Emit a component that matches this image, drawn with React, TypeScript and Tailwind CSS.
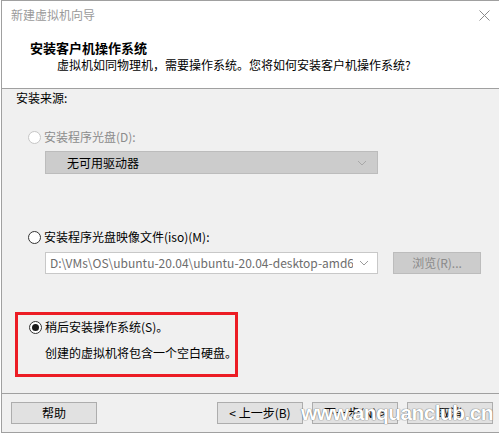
import React from "react";

const font = { fontFamily: '"Noto Sans CJK SC", "Noto Sans", sans-serif' };

function Radio({ checked = false, disabled = false }: { checked?: boolean; disabled?: boolean }) {
  return (
    <span
      className={`relative inline-flex h-[13px] w-[13px] shrink-0 items-center justify-center rounded-full border bg-white ${
        disabled ? "border-[#c6c6c6]" : "border-[#333333]"
      }`}
    >
      {checked && <span className="h-[7px] w-[7px] rounded-full bg-[#1a1a1a]" />}
    </span>
  );
}

function Chevron({ color }: { color: string }) {
  return (
    <svg width="10" height="6" viewBox="0 0 10 6" className="shrink-0">
      <path d="M1 1 L5 5 L9 1" fill="none" stroke={color} strokeWidth="1" />
    </svg>
  );
}

function Button({ children }: { children: React.ReactNode }) {
  return (
    <div className="flex h-[22px] w-[86px] items-center justify-center border border-[#adadad] bg-[#e1e1e1] text-[12px] text-black">
      {children}
    </div>
  );
}

export default function App() {
  return (
    <div className="h-[434px] w-[499px] bg-white" style={font}>
      <div className="ml-[1px] flex h-[433px] w-[498px] flex-col border-l border-t border-b border-[#a0a0a0] bg-[#f0f0f0]">
        {/* header */}
        <div className="h-[88px] shrink-0 border-b border-[#a0a0a0] bg-white">
          <div className="flex items-center justify-between pl-[9px] pr-[9px] pt-[6px]">
            <span className="text-[12px] leading-[16px] text-[#9a9a9a]">新建虚拟机向导</span>
            <svg width="11" height="11" viewBox="0 0 11 11">
              <path d="M0.5 0.5 L10.5 10.5 M10.5 0.5 L0.5 10.5" stroke="#8a8a8a" strokeWidth="1" />
            </svg>
          </div>
          <div className="mt-[17px] pl-[28px] text-[13px] font-bold leading-[16px] text-black">安装客户机操作系统</div>
          <div className="mt-[1px] pl-[55px] text-[12px] leading-[16px] text-black">
            虚拟机如同物理机，需要操作系统。您将如何安装客户机操作系统?
          </div>
        </div>

        {/* body */}
        <div className="flex-1 pl-[14px] pt-[1px]">
          <div className="text-[12px] leading-[16px] text-black">安装来源:</div>

          <div className="mt-[23px] flex items-center gap-[3px] pl-[12px] text-[12px] leading-[16px] text-[#8c8c8c]">
            <Radio disabled />
            <span>安装程序光盘(D):</span>
          </div>
          <div className="ml-[29px] mt-[6px] flex h-[23px] w-[333px] items-center justify-between border border-[#bcbcbc] bg-[#cccccc] pl-[21px] pr-[10px] text-[12px] text-black">
            <span>无可用驱动器</span>
            <Chevron color="#a8a8a8" />
          </div>

          <div className="mt-[55px] flex items-center gap-[3px] pl-[12px] text-[12px] leading-[16px] text-black">
            <Radio />
            <span>安装程序光盘映像文件(iso)(M):</span>
          </div>
          <div className="mt-[7px] flex items-center gap-[15px] pl-[29px]">
            <div className="flex h-[22px] w-[333px] items-center border border-[#c8c8c8] bg-white pl-[4px] pr-[8px] text-[12px] text-[#6d6d6d]">
              <span className="flex-1 overflow-hidden whitespace-nowrap">
                D:\VMs\OS\ubuntu-20.04\ubuntu-20.04-desktop-amd64.iso
              </span>
              <span className="ml-[6px]">
                <Chevron color="#9c9c9c" />
              </span>
            </div>
            <div className="flex h-[22px] w-[88px] items-center justify-center border border-[#bcbcbc] bg-[#cccccc] text-[12px] text-[#8a8a8a]">
              浏览(R)...
            </div>
          </div>

          <div className="-ml-[1px] mt-[38px] h-[65px] w-[223px] border-[3px] border-[#ec1c24] pl-[11px] pt-[4px]">
            <div className="flex items-center gap-[3px] whitespace-nowrap text-[12px] leading-[16px] text-black">
              <Radio checked />
              <span>稍后安装操作系统(S)。</span>
            </div>
            <div className="mt-[10px] whitespace-nowrap pl-[16px] text-[12px] leading-[16px] text-black">
              创建的虚拟机将包含一个空白硬盘。
            </div>
          </div>
        </div>

        {/* footer */}
        <div className="relative flex h-[39px] shrink-0 items-center border-t border-[#a0a0a0] pl-[9px] pr-[6px]">
          <Button>帮助</Button>
          <div className="ml-auto flex gap-[9px]">
            <Button>&lt; 上一步(B)</Button>
            <Button>下一步(N) &gt;</Button>
            <Button>取消</Button>
          </div>
          <span
            className="absolute left-[299px] top-[8px] whitespace-nowrap text-[21px] font-bold leading-[22px] tracking-[-0.6px] text-white"
            style={{
              fontFamily: '"Liberation Sans", Arial, sans-serif',
              textShadow: "0 0 1px #6a6a6a, 0 0 1px #6a6a6a",
            }}
          >
            www.anquanclub.cn
          </span>
        </div>
      </div>
    </div>
  );
}
